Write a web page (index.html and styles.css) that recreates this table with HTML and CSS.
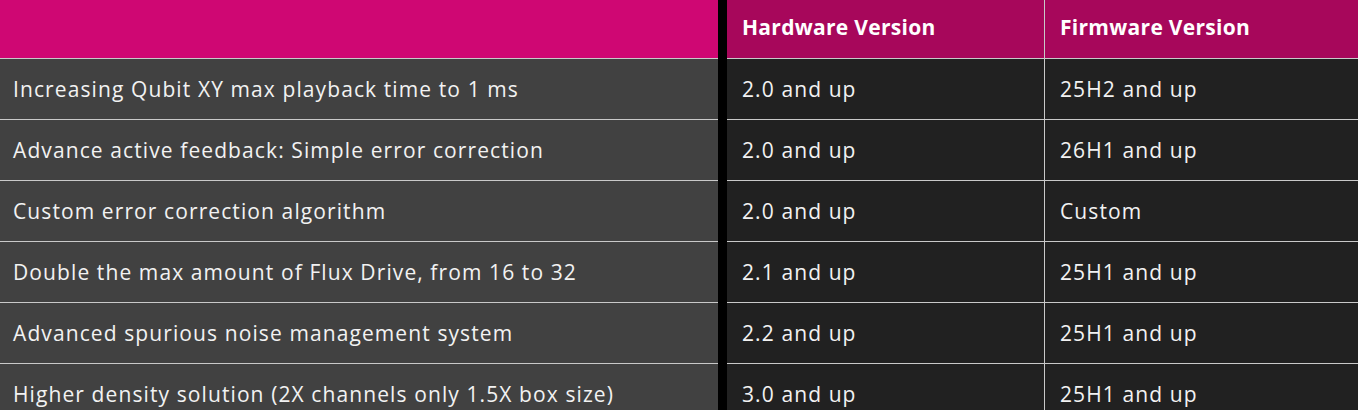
FILE: index.html
```html
<!DOCTYPE html>
<html lang="en">
<head>
<meta charset="utf-8">
<title>Feature compatibility</title>
<link rel="stylesheet" href="styles.css">
</head>
<body>
<div class="table">
  <div class="cell head feature"></div>
  <div class="spacer"></div>
  <div class="cell head mid">Hardware Version</div>
  <div class="cell head">Firmware Version</div>

  <div class="cell feature">Increasing Qubit XY max playback time to 1 ms</div>
  <div class="cell mid">2.0 and up</div>
  <div class="cell">25H2 and up</div>

  <div class="cell feature">Advance active feedback: Simple error correction</div>
  <div class="cell mid">2.0 and up</div>
  <div class="cell">26H1 and up</div>

  <div class="cell feature">Custom error correction algorithm</div>
  <div class="cell mid">2.0 and up</div>
  <div class="cell">Custom</div>

  <div class="cell feature">Double the max amount of Flux Drive, from 16 to 32</div>
  <div class="cell mid">2.1 and up</div>
  <div class="cell">25H1 and up</div>

  <div class="cell feature">Advanced spurious noise management system</div>
  <div class="cell mid">2.2 and up</div>
  <div class="cell">25H1 and up</div>

  <div class="cell feature">Higher density solution (2X channels only 1.5X box size)</div>
  <div class="cell mid">3.0 and up</div>
  <div class="cell">25H1 and up</div>
</div>
</body>
</html>
```
FILE: styles.css
```css
html, body {
  margin: 0;
  padding: 0;
  background: #212121;
}
body {
  font-family: "Open Sans", "Liberation Sans", sans-serif;
  color: #f2f2f2;
  overflow: hidden;
}
.table {
  display: grid;
  grid-template-columns: 718px 9px 318px 1fr;
  grid-auto-rows: 61px;
  grid-template-rows: 59px;
}
.spacer {
  grid-column: 2;
  grid-row: 1 / span 20;
  background: #000;
}
.cell {
  display: flex;
  align-items: center;
  box-sizing: border-box;
  border-bottom: 1px solid #c9c9c9;
  padding-left: 15px;
  font-size: 21px;
  letter-spacing: 1.1px;
  background: #212121;
  white-space: nowrap;
}
.feature {
  grid-column: 1;
  background: #414141;
  padding-left: 13px;
}
.mid {
  border-right: 1px solid #c9c9c9;
}
.head {
  background: #a7075b;
  color: #fff;
  font-weight: 700;
  letter-spacing: 0.3px;
  padding-bottom: 4px;
}
.head.feature {
  background: #cf0773;
}
```
